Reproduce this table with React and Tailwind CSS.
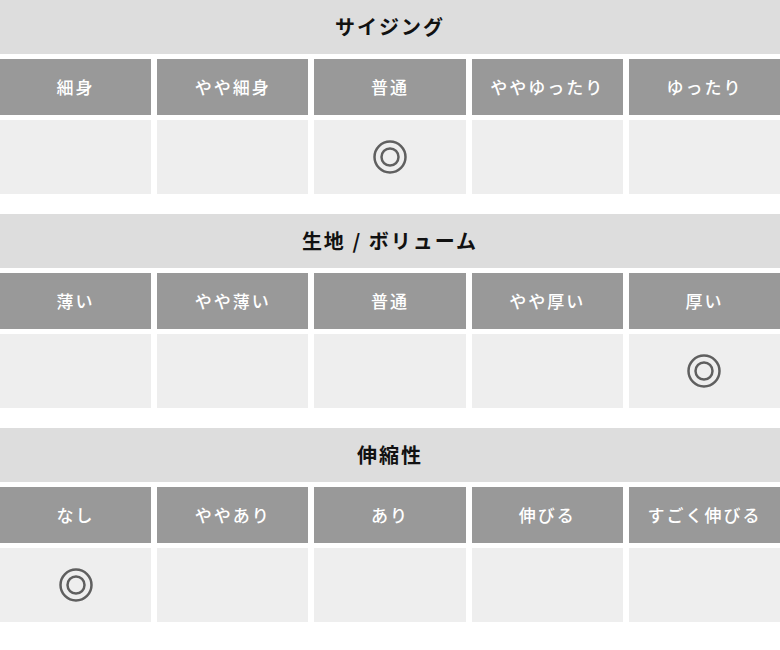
import React from 'react';

const sections = [
  { title: 'サイジング', labels: ['細身', 'やや細身', '普通', 'ややゆったり', 'ゆったり'], mark: 2 },
  { title: '生地 / ボリューム', labels: ['薄い', 'やや薄い', '普通', 'やや厚い', '厚い'], mark: 4 },
  { title: '伸縮性', labels: ['なし', 'ややあり', 'あり', '伸びる', 'すごく伸びる'], mark: 0 },
];

function DoubleCircle() {
  return (
    <svg width="34" height="34" viewBox="0 0 34 34" fill="none" stroke="#5f5f5f" strokeWidth="2.5">
      <circle cx="17" cy="17" r="15.5" />
      <circle cx="17" cy="17" r="8.5" />
    </svg>
  );
}

export default function App() {
  return (
    <div className="w-[780px] bg-white" style={{ fontFamily: '"Noto Sans CJK JP", "Noto Sans", sans-serif' }}>
      {sections.map((s) => (
        <div key={s.title} className="flex flex-col gap-[5px] mb-[20px]">
          <div className="h-[54px] bg-[#dddddd] flex items-center justify-center text-[20px] font-bold tracking-[2px] text-[#111]">
            {s.title}
          </div>
          <div className="grid grid-cols-5 gap-x-[6px] gap-y-[5px]">
            {s.labels.map((l) => (
              <div key={l} className="h-[56px] bg-[#999999] flex items-center justify-center text-white text-[17px] font-medium tracking-[2px]">
                {l}
              </div>
            ))}
            {s.labels.map((l, i) => (
              <div key={'c' + l} className="h-[74px] bg-[#eeeeee] flex items-center justify-center">
                {i === s.mark && <DoubleCircle />}
              </div>
            ))}
          </div>
        </div>
      ))}
    </div>
  );
}
